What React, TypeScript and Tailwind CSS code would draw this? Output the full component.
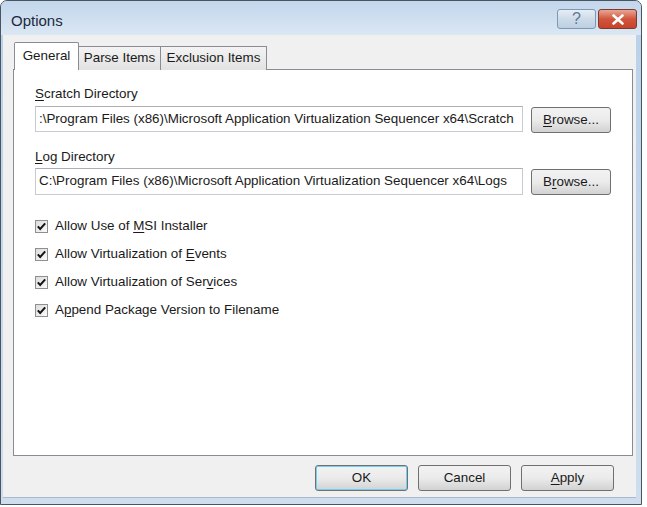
import React from "react";

const U = ({ children }: { children: React.ReactNode }) => <span className="underline underline-offset-2">{children}</span>;

function Check({ children }: { children: React.ReactNode }) {
  return (
    <div className="flex items-center h-[28px]">
      <div className="w-[13px] h-[13px] border border-[#8f8f8f] bg-gradient-to-br from-[#dcdcdc] to-[#fbfbfb] flex items-center justify-center">
        <svg width="11" height="11" viewBox="0 0 11 11">
          <path d="M1.8 5.3 L4.2 8 L9.2 2.3" fill="none" stroke="#151515" strokeWidth="2" />
        </svg>
      </div>
      <span className="ml-[7px]">{children}</span>
    </div>
  );
}

function Btn({ children, w, cls = "" }: { children: React.ReactNode; w: string; cls?: string }) {
  return (
    <div
      className={`${w} h-[26px] rounded-[3px] border border-[#707070] bg-gradient-to-b from-[#f2f2f2] via-[#ebebeb] to-[#d2d2d2] flex items-center justify-center ${cls}`}
    >
      {children}
    </div>
  );
}

export default function App() {
  return (
    <div className="w-[647px] h-[507px] bg-white" style={{ fontFamily: '"Liberation Sans", Arial, sans-serif' }}>
      <div className="w-[642px] h-[505px] border border-[#4a5562] rounded-t-[7px] bg-gradient-to-b from-[#b9d1ea] to-[#cfdeee] flex flex-col text-[13.4px] text-[#1a1a1a]">
        {/* title bar */}
        <div className="h-[34px] flex items-start shrink-0 bg-gradient-to-b from-[#c2d6ec] to-[#dbe7f3] rounded-t-[6px]">
          <div className="ml-[10px] mt-[9px] text-[15px] text-[#1b2a3c]">Options</div>
          <div className="ml-auto mr-[4px] mt-[8px] flex gap-[2px]">
            <div className="w-[39px] h-[20px] rounded-[3px] border border-[#7f97b2] bg-gradient-to-b from-[#e6eef6] via-[#cddbe9] to-[#bccfe2] flex items-center justify-center text-[#5f7895] text-[16px]">
              ?
            </div>
            <div className="w-[39px] h-[20px] rounded-[3px] border border-[#7a3a30] bg-gradient-to-b from-[#e8a594] via-[#d0553c] to-[#c8432a] flex items-center justify-center">
              <svg width="14" height="11" viewBox="0 0 14 11">
                <path d="M2.5 1.5 L11.5 9.5 M11.5 1.5 L2.5 9.5" stroke="#fff" strokeWidth="2.6" strokeLinecap="round" />
              </svg>
            </div>
          </div>
        </div>
        {/* body */}
        <div className="flex-1 ml-[2px] mr-[5px] mb-[6px] bg-[#f0f0f0] flex flex-col border-b border-[#aab9c9]">
          <div className="pl-[10px] pr-[3px] pt-[7px] flex flex-col">
            {/* tabs */}
            <div className="flex items-end h-[28px] pl-[1px] relative z-10">
              <div className="h-[28px] w-[65px] border border-[#898c95] border-b-0 bg-white flex items-center justify-center rounded-t-[2px]">
                General
              </div>
              <div className="h-[24px] w-[82px] border border-[#898c95] border-l-0 border-b-0 bg-gradient-to-b from-[#f3f3f3] to-[#e2e2e2] flex items-center justify-center">
                Parse Items
              </div>
              <div className="h-[24px] w-[106px] border border-[#898c95] border-l-0 border-b-0 bg-gradient-to-b from-[#f3f3f3] to-[#e2e2e2] flex items-center justify-center">
                Exclusion Items
              </div>
            </div>
            {/* panel */}
            <div className="h-[387px] w-[620px] -mt-px border border-[#898c95] bg-white pl-[21px] pt-[14px]">
              <div className="h-[19px]"><U>S</U>cratch Directory</div>
              <div className="flex items-center mt-[2px]">
                <div className="w-[488px] h-[26px] border border-[#c5cbd1] border-t-[#abadb3] flex items-center pl-[3px] overflow-hidden whitespace-nowrap">
                  :\Program Files (x86)\Microsoft Application Virtualization Sequencer x64\Scratch
                </div>
                <Btn w="w-[80px]" cls="ml-[8px] mt-[2px] h-[25px]">
                  <span><U>B</U>rowse...</span>
                </Btn>
              </div>
              <div className="h-[19px] mt-[14px]"><U>L</U>og Directory</div>
              <div className="flex items-center mt-[1px]">
                <div className="w-[488px] h-[27px] border border-[#c5cbd1] border-t-[#abadb3] flex items-center pl-[3px] overflow-hidden whitespace-nowrap">
                  C:\Program Files (x86)\Microsoft Application Virtualization Sequencer x64\Logs
                </div>
                <Btn w="w-[80px]" cls="ml-[8px] mt-[2px] h-[25px]">
                  <span>B<U>r</U>owse...</span>
                </Btn>
              </div>
              <div className="mt-[17px] flex flex-col">
                <Check>Allow Use of <U>M</U>SI Installer</Check>
                <Check>Allow Virtualization of <U>E</U>vents</Check>
                <Check>Allow Virtualization of Ser<U>v</U>ices</Check>
                <Check>A<U>p</U>pend Package Version to Filename</Check>
              </div>
            </div>
          </div>
          <div className="flex justify-end gap-[10px] mt-[9px] pr-[22px]">
            <Btn w="w-[93px]" cls="border-[#3c7fb1] shadow-[inset_0_0_0_1px_#6fd0f4]">OK</Btn>
            <Btn w="w-[93px]">Cancel</Btn>
            <Btn w="w-[93px]"><span><U>A</U>pply</span></Btn>
          </div>
        </div>
      </div>
    </div>
  );
}
